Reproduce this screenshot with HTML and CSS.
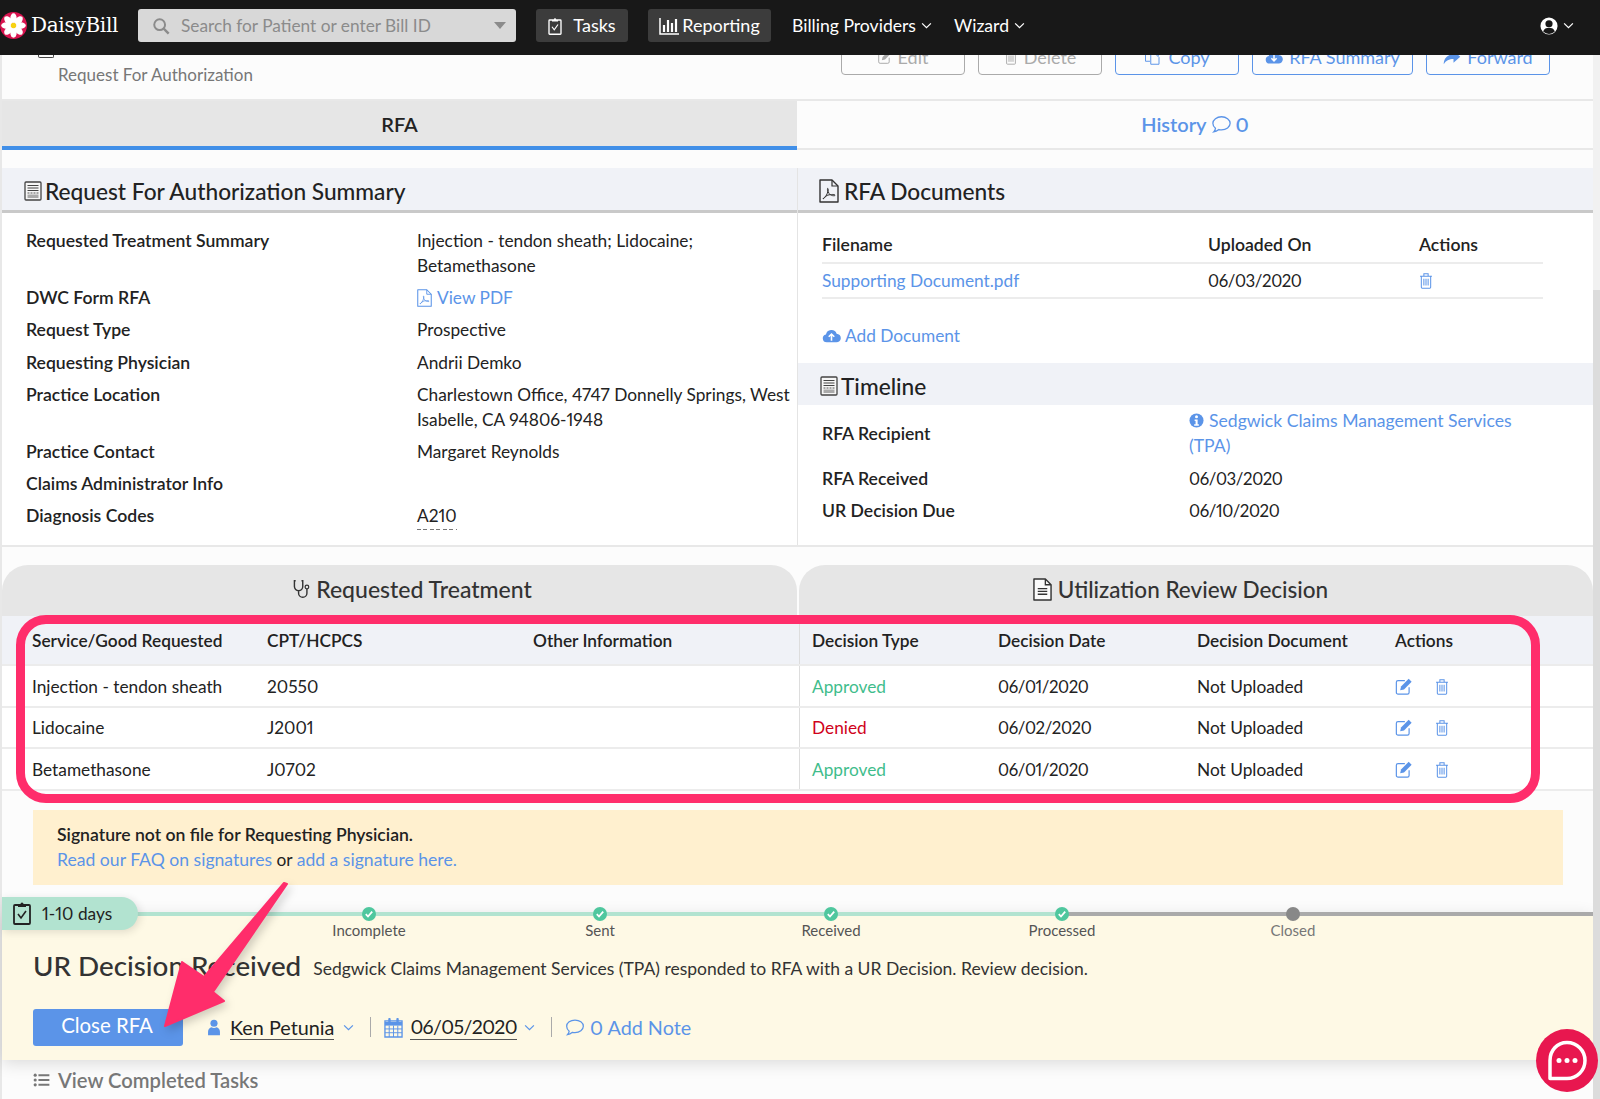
FILE: index.html
```html
<!DOCTYPE html>
<html lang="en">
<head>
<meta charset="utf-8">
<title>DaisyBill RFA</title>
<link rel="stylesheet" href="styles.css">
</head>
<body>
<svg class="sprite" xmlns="http://www.w3.org/2000/svg">
  <symbol id="i-chev" viewBox="0 0 12 8"><path d="M1 1.5 6 6.5l5-5" fill="none" stroke="currentColor" stroke-width="1.4"/></symbol>
  <symbol id="i-rfa" viewBox="0 0 18 20"><rect x="1" y="1" width="16" height="18" rx="1" fill="#f6f6f6" stroke="#444" stroke-width="1.3"/><path d="M3.5 4.5h11M3.5 7h11M3.5 9.5h11" stroke="#444" stroke-width="1"/><path d="M3.5 12h11" stroke="#555" stroke-width="1" stroke-dasharray="2 1"/><rect x="3.5" y="13.5" width="11" height="3.5" fill="#aaa"/></symbol>
  <symbol id="i-pdf" viewBox="0 0 20 24"><path d="M1 1h12l6 6v16H1z" fill="none" stroke="currentColor" stroke-width="1.4" stroke-linejoin="round"/><path d="M13 1v6h6" fill="none" stroke="currentColor" stroke-width="1.2"/><path d="M4 20c2-1 4-4 5-8 .5-2 0-3-.5-2.500-.5 1 1 5 3 6.500 2 1 5 1 4.500 0-.5-1-6-.5-8 .5-2 1-4 3-4 3.500z" fill="none" stroke="currentColor" stroke-width="1"/></symbol>
  <symbol id="i-trash" viewBox="0 0 16 20"><path d="M1 5h14M5.500 5V2h5v3M2.500 5v13a1 1 0 0 0 1 1h9a1 1 0 0 0 1-1V5M5.500 8v8M8 8v8M10.500 8v8" fill="none" stroke="currentColor" stroke-width="1.2"/></symbol>
  <symbol id="i-edit" viewBox="0 0 20 20"><path d="M16 11v6a2 2 0 0 1-2 2H3a2 2 0 0 1-2-2V5a2 2 0 0 1 2-2h8" fill="none" stroke="currentColor" stroke-width="1.4"/><path d="M6.500 10 15.500 1l3.500 3.500L10 13.500 5.500 14.500z" fill="currentColor"/></symbol>
  <symbol id="i-copy" viewBox="0 0 22 20"><path d="M7 5V1h7l4 4v3M7 5H1v10h6" fill="none" stroke="currentColor" stroke-width="1.3"/><path d="M8 6h7l4 4v9H8z" fill="none" stroke="currentColor" stroke-width="1.3"/></symbol>
  <symbol id="i-cloud-down" viewBox="0 0 24 18"><path d="M6 17a5 5 0 0 1-1-9.900A7 7 0 0 1 18.500 6 5.500 5.500 0 0 1 18 17z" fill="currentColor"/><path d="M12 5v8M8.500 10l3.500 3.500 3.500-3.500" fill="none" stroke="#fff" stroke-width="2"/></symbol>
  <symbol id="i-cloud-up" viewBox="0 0 24 18"><path d="M6 17a5 5 0 0 1-1-9.900A7 7 0 0 1 18.500 6 5.500 5.500 0 0 1 18 17z" fill="currentColor"/><path d="M12 15V7M8.500 10 12 6.500l3.500 3.500" fill="none" stroke="#fff" stroke-width="2"/></symbol>
  <symbol id="i-forward" viewBox="0 0 24 20"><path d="M14 1l9 8-9 8v-5C8 12 4 14 1 19 1 11 6 6 14 5.500z" fill="currentColor"/></symbol>
  <symbol id="i-comment" viewBox="0 0 24 22"><path d="M12 2c5.500 0 10 3.400 10 7.600s-4.500 7.600-10 7.600c-1 0-2-.1-3-.4-1.500 1.200-3.500 2.500-6 2.800 1-1 1.800-2.500 2-4.200C3.200 14 2 12 2 9.600 2 5.400 6.500 2 12 2z" fill="none" stroke="currentColor" stroke-width="1.500"/></symbol>
  <symbol id="i-steth" viewBox="0 0 20 24"><path d="M3 2H1.500v7a5 5 0 0 0 10 0V2H10M6.500 14v3a5 5 0 0 0 10 0v-5" fill="none" stroke="currentColor" stroke-width="1.700"/><circle cx="16.500" cy="9.500" r="2.200" fill="none" stroke="currentColor" stroke-width="1.500"/></symbol>
  <symbol id="i-file" viewBox="0 0 20 24"><path d="M1 1h12l6 6v16H1z" fill="#fafafa" stroke="currentColor" stroke-width="1.500" stroke-linejoin="round"/><path d="M13 1v6h6M5 11h10M5 14h10M5 17h10" fill="none" stroke="currentColor" stroke-width="1.400"/></symbol>
  <symbol id="i-clip" viewBox="0 0 18 24"><path d="M5 4H2a1 1 0 0 0-1 1v17a1 1 0 0 0 1 1h14a1 1 0 0 0 1-1V5a1 1 0 0 0-1-1h-3" fill="none" stroke="currentColor" stroke-width="1.800"/><path d="M5 6V3h2.500a1.500 1.500 0 0 1 3 0H13v3z" fill="currentColor"/><path d="M5 13l3 4 5-7" fill="none" stroke="currentColor" stroke-width="1.600"/></symbol>
  <symbol id="i-user" viewBox="0 0 16 20"><circle cx="8" cy="5" r="4.200" fill="currentColor"/><path d="M1 19v-4c0-3 2-5 4-5.300a6 6 0 0 0 6 0c2 .3 4 2.300 4 5.300v4z" fill="currentColor"/></symbol>
  <symbol id="i-cal" viewBox="0 0 20 22"><path d="M1 4h18v17H1z" fill="none" stroke="currentColor" stroke-width="1.400"/><path d="M1 5h18v4H1z" fill="currentColor"/><path d="M1 12.500h18M1 16.500h18M5.500 9v12M10 9v12M14.500 9v12" stroke="currentColor"/><rect x="4.500" y="1" width="2.500" height="5" rx="1" fill="currentColor"/><rect x="13" y="1" width="2.500" height="5" rx="1" fill="currentColor"/></symbol>
  <symbol id="i-list" viewBox="0 0 18 16"><path d="M5.500 2.500H18M5.500 8H18M5.500 13.500H18" stroke="currentColor" stroke-width="2.400"/><circle cx="1.800" cy="2.500" r="1.800" fill="currentColor"/><circle cx="1.800" cy="8" r="1.800" fill="currentColor"/><circle cx="1.800" cy="13.500" r="1.800" fill="currentColor"/></symbol>
  <symbol id="i-check" viewBox="0 0 14 14"><circle cx="7" cy="7" r="7" fill="#4fc79e"/><path d="M3.800 7.200 6 9.500l4.200-4.800" fill="none" stroke="#fff" stroke-width="1.800"/></symbol>
</svg>

<header class="nav">
  <div class="logo">
    <svg class="logo-mark" viewBox="0 0 28 28" aria-hidden="true">
      <circle cx="14" cy="14" r="14" fill="#d9134f"/>
      <g fill="#fff">
        <ellipse cx="14" cy="6.500" rx="3.300" ry="5.200"/>
        <ellipse cx="14" cy="6.500" rx="3.300" ry="5.200" transform="rotate(45 14 14)"/>
        <ellipse cx="14" cy="6.500" rx="3.300" ry="5.200" transform="rotate(90 14 14)"/>
        <ellipse cx="14" cy="6.500" rx="3.300" ry="5.200" transform="rotate(135 14 14)"/>
        <ellipse cx="14" cy="6.500" rx="3.300" ry="5.200" transform="rotate(180 14 14)"/>
        <ellipse cx="14" cy="6.500" rx="3.300" ry="5.200" transform="rotate(225 14 14)"/>
        <ellipse cx="14" cy="6.500" rx="3.300" ry="5.200" transform="rotate(270 14 14)"/>
        <ellipse cx="14" cy="6.500" rx="3.300" ry="5.200" transform="rotate(315 14 14)"/>
      </g>
      <circle cx="14" cy="14" r="2.800" fill="#f7d313"/>
    </svg>
    <span class="logo-text">DaisyBill</span>
  </div>
  <div class="search">
    <svg class="search-icon" viewBox="0 0 20 20" aria-hidden="true"><circle cx="8.500" cy="8.500" r="6" fill="none" stroke="currentColor" stroke-width="2.200"/><path d="M13 13l5.500 5.500" stroke="currentColor" stroke-width="2.600"/></svg>
    <span class="search-text">Search for Patient or enter Bill ID</span>
    <span class="search-caret"></span>
  </div>
  <div class="nav-btn nav-tasks"><svg class="ic-clip-nav"><use href="#i-clip"/></svg>Tasks</div>
  <div class="nav-btn nav-reporting">
    <svg class="ic-bars" viewBox="0 0 20 18" aria-hidden="true"><path d="M1 1v16h19" fill="none" stroke="#fff" stroke-width="1.500"/><path d="M5 15V8M9 15V3M13 15V6M17 15V2" stroke="#fff" stroke-width="2.200"/></svg>Reporting
  </div>
  <div class="nav-link nav-billing">Billing Providers<svg class="chev"><use href="#i-chev"/></svg></div>
  <div class="nav-link nav-wizard">Wizard<svg class="chev"><use href="#i-chev"/></svg></div>
  <div class="nav-user">
    <svg class="ic-user-round" viewBox="0 0 20 20" aria-hidden="true"><circle cx="10" cy="10" r="9.500" fill="#fff"/><circle cx="10" cy="7.500" r="4" fill="#181818"/><path d="M3.500 16c1-3 3.500-4 6.500-4s5.500 1 6.500 4a9 9 0 0 1-13 0z" fill="#181818"/></svg>
    <svg class="chev"><use href="#i-chev"/></svg>
  </div>
</header>

<div class="workspace">
  <main class="main">
    <div class="title-row">
      <div class="title-left">
        <div class="title-icon"></div>
        <div class="subtitle">Request For Authorization</div>
      </div>
      <div class="actions">
        <span class="btn btn-off"><svg class="ic-16"><use href="#i-edit"/></svg>Edit</span>
        <span class="btn btn-off"><svg class="ic-16"><use href="#i-trash"/></svg>Delete</span>
        <span class="btn"><svg class="ic-18"><use href="#i-copy"/></svg>Copy</span>
        <span class="btn btn-wide"><svg class="ic-18"><use href="#i-cloud-down"/></svg>RFA Summary</span>
        <span class="btn"><svg class="ic-18"><use href="#i-forward"/></svg>Forward</span>
      </div>
    </div>

    <div class="tabs">
      <div class="tab tab-on">RFA</div>
      <div class="tab tab-link">History <svg class="ic-comment"><use href="#i-comment"/></svg> 0</div>
    </div>

    <section class="info">
      <div class="info-left">
        <h2 class="head head-line"><svg class="ic-rfa"><use href="#i-rfa"/></svg>Request For Authorization Summary</h2>
        <dl class="facts">
          <dt>Requested Treatment Summary</dt><dd>Injection - tendon sheath; Lidocaine; Betamethasone</dd>
          <dt>DWC Form RFA</dt><dd><a class="link"><svg class="ic-pdf-sm"><use href="#i-pdf"/></svg>View PDF</a></dd>
          <dt>Request Type</dt><dd>Prospective</dd>
          <dt>Requesting Physician</dt><dd>Andrii Demko</dd>
          <dt>Practice Location</dt><dd>Charlestown Office, 4747 Donnelly Springs, West Isabelle, CA 94806-1948</dd>
          <dt>Practice Contact</dt><dd>Margaret Reynolds</dd>
          <dt>Claims Administrator Info</dt><dd></dd>
          <dt>Diagnosis Codes</dt><dd><span class="dashed">A210</span></dd>
        </dl>
      </div>
      <div class="info-right">
        <h2 class="head head-line head-docs"><svg class="ic-pdf-lg"><use href="#i-pdf"/></svg>RFA Documents</h2>
        <div class="docs">
          <div class="doc-row doc-head"><span>Filename</span><span>Uploaded On</span><span>Actions</span></div>
          <div class="doc-row doc-body"><a class="link">Supporting Document.pdf</a><span class="num">06/03/2020</span><svg class="ic-trash link"><use href="#i-trash"/></svg></div>
          <a class="link add-doc"><svg class="ic-19"><use href="#i-cloud-up"/></svg>Add Document</a>
        </div>
        <h2 class="head head-timeline"><svg class="ic-rfa"><use href="#i-rfa"/></svg>Timeline</h2>
        <div class="timeline">
          <div class="tl-row"><strong>RFA Recipient</strong><a class="link tl-link"><svg class="ic-info" viewBox="0 0 16 16" aria-hidden="true"><circle cx="8" cy="8" r="7.500" fill="currentColor"/><circle cx="8" cy="4" r="1.600" fill="#fff"/><path d="M6 7h3.200v5H10.500v1.500h-5V12H7V8.500H6z" fill="#fff"/></svg>Sedgwick Claims Management Services (TPA)</a></div>
          <div class="tl-row"><strong>RFA Received</strong><span class="num">06/03/2020</span></div>
          <div class="tl-row"><strong>UR Decision Due</strong><span class="num">06/10/2020</span></div>
        </div>
      </div>
    </section>

    <section class="treat">
      <div class="treat-heads">
        <h2 class="round-head round-left"><svg class="ic-steth"><use href="#i-steth"/></svg>Requested Treatment</h2>
        <h2 class="round-head round-right"><svg class="ic-file"><use href="#i-file"/></svg>Utilization Review Decision</h2>
      </div>
      <div class="t-row t-head"><span>Service/Good Requested</span><span>CPT/HCPCS</span><span>Other Information</span><span>Decision Type</span><span>Decision Date</span><span>Decision Document</span><span>Actions</span></div>
      <div class="t-row"><span>Injection - tendon sheath</span><span>20550</span><span></span><span class="ok">Approved</span><span class="num">06/01/2020</span><span>Not Uploaded</span><span class="t-actions"><svg class="ic-edit"><use href="#i-edit"/></svg><svg class="ic-trash"><use href="#i-trash"/></svg></span></div>
      <div class="t-row"><span>Lidocaine</span><span>J2001</span><span></span><span class="no">Denied</span><span class="num">06/02/2020</span><span>Not Uploaded</span><span class="t-actions"><svg class="ic-edit"><use href="#i-edit"/></svg><svg class="ic-trash"><use href="#i-trash"/></svg></span></div>
      <div class="t-row"><span>Betamethasone</span><span>J0702</span><span></span><span class="ok">Approved</span><span class="num">06/01/2020</span><span>Not Uploaded</span><span class="t-actions"><svg class="ic-edit"><use href="#i-edit"/></svg><svg class="ic-trash"><use href="#i-trash"/></svg></span></div>
    </section>

    <div class="notice">
      <strong>Signature not on file for Requesting Physician.</strong><br>
      <a class="link">Read our FAQ on signatures</a> or <a class="link">add a signature here.</a>
    </div>

    <section class="panel">
      <div class="track">
        <div class="pill"><svg class="ic-clip"><use href="#i-clip"/></svg>1-10 days</div>
        <div class="step"><svg class="dot"><use href="#i-check"/></svg>Incomplete</div>
        <div class="step"><svg class="dot"><use href="#i-check"/></svg>Sent</div>
        <div class="step"><svg class="dot"><use href="#i-check"/></svg>Received</div>
        <div class="step"><svg class="dot"><use href="#i-check"/></svg>Processed</div>
        <div class="step step-off"><span class="dot dot-off"></span>Closed</div>
      </div>
      <div class="status">
        <h1 class="status-title">UR Decision Received</h1>
        <p class="status-text">Sedgwick Claims Management Services (TPA) responded to RFA with a UR Decision. Review decision.</p>
      </div>
      <div class="panel-actions">
        <span class="primary">Close RFA</span>
        <svg class="ic-user link"><use href="#i-user"/></svg>
        <span class="under">Ken Petunia</span>
        <svg class="chev chev-blue"><use href="#i-chev"/></svg>
        <span class="sep"></span>
        <svg class="ic-cal link"><use href="#i-cal"/></svg>
        <span class="under under-date">06/05/2020</span>
        <svg class="chev chev-blue chev-date"><use href="#i-chev"/></svg>
        <span class="sep"></span>
        <svg class="ic-note link"><use href="#i-comment"/></svg>
        <a class="link">0 Add Note</a>
      </div>
    </section>

    <div class="completed"><svg class="ic-list"><use href="#i-list"/></svg>View Completed Tasks</div>
  </main>
  <aside class="scrollbar"><div class="thumb"></div></aside>
</div>

<div class="callout-box"></div>
<svg class="callout-arrow" viewBox="0 0 1600 1099" aria-hidden="true">
  <path d="M287 884 213 992 224 1001 165 1026 182 962 204 977 284 883z" fill="#ff2d6b" stroke="#ff2d6b" stroke-width="2" stroke-linejoin="round"/>
</svg>
<div class="chat">
  <svg viewBox="0 0 62 62" aria-hidden="true"><path d="M31 13c10 0 18 8 18 18s-8 18-18 18H14V31c0-10 7-18 17-18z" fill="none" stroke="#fff" stroke-width="3.500" stroke-linejoin="round"/><circle cx="23" cy="31" r="2.500" fill="#fff"/><circle cx="31" cy="31" r="2.500" fill="#fff"/><circle cx="39" cy="31" r="2.500" fill="#fff"/></svg>
</div>
</body>
</html>
```

FILE: styles.css
```css
* { box-sizing: border-box; }
html, body { margin: 0; height: 1099px; overflow: hidden; }
body {
  position: relative;
  display: flex;
  flex-direction: column;
  font-family: "Lato", "Open Sans", sans-serif;
  font-size: 17.3px;
  line-height: 25px;
  color: #222;
  background: #fcfcfc;
  font-variant-numeric: proportional-nums;
}
svg { flex: none; }
.sprite { display: none; }
.link { color: #5b94e8; }
h1, h2, p, dl, dd { margin: 0; font-weight: 400; }
.num { font-size: 16.8px; letter-spacing: -.4px; }

/* nav */
.nav { flex: none; height: 55px; display: flex; align-items: center; background: #181818; color: #fff; padding-bottom: 4px; font-size: 18px; }
.logo { display: flex; align-items: center; width: 138px; }
.logo-mark { width: 27px; height: 27px; }
.logo-text { font-family: "DejaVu Serif", serif; font-size: 20px; margin-left: 4px; letter-spacing: -.3px; }
.search { width: 378px; height: 33px; background: #d8d8d8; border-radius: 3px; display: flex; align-items: center; padding-left: 14px; color: #8b8b8b; font-size: 17.3px; }
.search-icon { width: 18px; height: 18px; }
.search-text { margin-left: 11px; flex: 1; }
.search-caret { width: 0; height: 0; border: 6px solid transparent; border-top: 7px solid #8b8b8b; border-bottom: 0; margin-right: 10px; }
.nav-btn { height: 33px; background: #3c3c3c; border-radius: 3px; display: flex; align-items: center; justify-content: center; }
.nav-tasks { width: 92px; margin-left: 20px; }
.nav-reporting { width: 123px; margin-left: 20px; }
.ic-clip-nav { width: 14px; height: 18px; margin-right: 11px; color: #fff; }
.ic-bars { width: 20px; height: 18px; margin-right: 3px; }
.nav-link { display: flex; align-items: center; font-size: 17.6px; }
.nav-billing { margin-left: 21px; }
.nav-wizard { margin-left: 22px; }
.chev { width: 11px; height: 7px; margin-left: 5px; }
.nav-user { margin-left: auto; margin-right: 26px; display: flex; align-items: center; }
.ic-user-round { width: 18px; height: 18px; }

/* frame */
.workspace { flex: 1; display: flex; min-height: 0; }
.main { flex: 1; min-width: 0; border-left: 2px solid #e8e8e8; }
.scrollbar { flex: none; width: 7px; background: #f1f1f1; display: flex; flex-direction: column; padding-top: 235px; }
.thumb { flex: 1; background: #dcdcdc; }

/* title */
.title-row { height: 46px; display: flex; justify-content: space-between; align-items: flex-end; border-bottom: 2px solid #e8e8e8; padding: 0 43px 24px 0; overflow: hidden; }
.title-left { align-self: flex-start; }
.title-icon { width: 16px; height: 3px; margin-left: 36px; border: 1.500px solid #444; border-top: 0; border-radius: 0 0 2px 2px; }
.subtitle { margin: 4px 0 0 56px; color: #777; font-size: 17px; }
.actions { display: flex; gap: 13px; flex: none; font-size: 18px; }
.btn { width: 124px; height: 36px; display: flex; align-items: center; justify-content: center; gap: 6px; border: 1.500px solid #5b94e8; border-radius: 4px; color: #5b94e8; }
.btn-off { border-color: #aaa; color: #aaa; }
.btn-wide { width: 161px; }
.ic-16 { width: 14px; height: 16px; }
.ic-18 { width: 18px; height: 15px; }
.ic-19 { width: 19px; height: 16px; }

/* tabs */
.tabs { display: grid; grid-template-columns: 795px 1fr; height: 49px; }
.tab { display: flex; align-items: center; justify-content: center; font-size: 20px; font-weight: 600; }
.tab-on { background: #e6e6e6; border-bottom: 4px solid #418fe8; padding-top: 2px; }
.tab-link { color: #5b94e8; border-bottom: 2px solid #e8e8e8; gap: 4px; }
.ic-comment { width: 21px; height: 19px; }

/* info */
.info { display: grid; grid-template-columns: 795px 1fr; margin-top: 18px; border-bottom: 2px solid #e8e8e8; background: #fff; }
.head { display: flex; align-items: center; height: 42px; padding-top: 4px; font-size: 22.700px; font-weight: 500; background: #f0f2f7; color: #222; }
.head-line { height: 45px; border-bottom: 3px solid #c9c9c9; padding-left: 22px; }
.head-docs { padding-left: 21px; }
.head-timeline { padding-left: 22px; }
.ic-rfa { width: 18px; height: 20px; margin-right: 3px; }
.ic-pdf-lg { width: 20px; height: 24px; margin-right: 5px; color: #333; }
.facts { display: grid; grid-template-columns: 391px 1fr; row-gap: 7.200px; padding: 15px 0 15px 24px; }
dt { font-weight: 600; font-size: 17.6px; }
dd { max-width: 378px; }
.ic-pdf-sm { width: 15px; height: 18px; margin-right: 5px; vertical-align: -3px; }
.dashed { display: inline-block; padding-bottom: 2px; line-height: 24px; background: repeating-linear-gradient(to right, #777 0 4px, transparent 4px 6.500px) left bottom / 100% 1.500px no-repeat; }
.info-right { border-left: 1px solid #e4e4e4; }
.docs { padding: 14px 0 15px 24px; }
.doc-row { display: grid; grid-template-columns: 386px 211px 124px; width: 721px; align-items: center; border-bottom: 2px solid #ececec; }
.doc-head { height: 37px; font-weight: 600; font-size: 17.6px; }
.doc-body { height: 35px; }
.ic-trash { width: 14px; height: 17px; }
.add-doc { display: flex; align-items: center; gap: 4px; margin-top: 24px; }
.timeline { padding: 3px 0 0 24px; display: flex; flex-direction: column; gap: 7.500px; }
.tl-row { display: grid; grid-template-columns: 367px 340px; align-items: center; }
.tl-row strong { font-weight: 600; font-size: 17.6px; }
.tl-link { font-size: 17.600px; }
.ic-info { width: 15px; height: 15px; margin-right: 5px; vertical-align: -1px; }

/* treatment */
.treat { margin-top: 18px; background: #fff; }
.treat-heads { display: grid; grid-template-columns: 795px 1fr; gap: 2px; background: #fcfcfc; }
.round-head { height: 51px; display: flex; align-items: center; justify-content: center; gap: 6px; padding-bottom: 3px; background: #e6e6e6; border-radius: 26px 26px 0 0; font-size: 23px; font-weight: 500; color: #333; }
.round-left { padding-left: 26px; }
.round-right { padding-right: 31px; font-size: 22.500px; }
.ic-steth { width: 17px; height: 20px; }
.ic-file { width: 19px; height: 23px; }
.t-row { display: grid; grid-template-columns: 265px 266px 266px 199px 199px 198px 1fr; height: 41.500px; border-bottom: 2px solid #ececec; align-items: stretch; }
.t-row > span { display: flex; align-items: center; }
.t-row > span:first-child { padding-left: 30px; }
.t-row > span:nth-child(4) { border-left: 1px solid #ddd; padding-left: 12px; }
.t-head { height: 50px; background: #f0f2f7; font-weight: 600; }
.ok { color: #3fbd8c; }
.no { color: #d0021b; }
.t-actions { gap: 22px; color: #5b94e8; }
.ic-edit { width: 18px; height: 17px; }

/* notice */
.notice { margin: 19px 30px 0 31px; height: 75px; padding: 12px 24px; background: #fff0cf; }
.notice strong { font-weight: 600; font-size: 17.6px; }
.notice .link { font-size: 17.600px; }

/* panel */
.panel { display: flow-root; margin-top: 29px; height: 146px; background: #fef9e5; box-shadow: 0 3px 16px rgba(0,0,0,.14); }
.track { position: relative; margin-top: -17px; height: 43px; display: flex; background: linear-gradient(to right, #b2e3d0 1060px, #aaa 1060px) 0 15px / 100% 4px no-repeat; }
.pill { width: 136px; height: 33px; margin-right: 115.500px; display: flex; align-items: center; gap: 11px; padding-left: 11px; background: #b2e3d0; border-radius: 0 17px 17px 0; box-shadow: 2px 2px 8px rgba(0,0,0,.12); font-size: 17.300px; }
.ic-clip { width: 18px; height: 24px; }
.step { width: 231px; display: flex; flex-direction: column; align-items: center; padding-top: 10px; font-size: 15px; line-height: 18px; color: #555; }
.step-off { color: #777; }
.dot { width: 14px; height: 14px; }
.dot-off { display: block; background: #888; border-radius: 50%; }
.status { display: flex; align-items: center; gap: 12px; padding-left: 31px; margin-top: 9px; }
.status-title { font-size: 27.800px; line-height: 34px; font-weight: 500; color: #333; }
.status-text { font-size: 17.500px; color: #333; margin-top: 5px; }
.panel-actions { display: flex; align-items: center; margin-top: 26px; padding-left: 31px; font-size: 19.800px; }
.primary { width: 150px; height: 37px; padding: 0 2px 3px 0; display: flex; align-items: center; justify-content: center; background: #5b94e8; color: #fff; border-radius: 3px; margin-right: 24px; font-size: 20.400px; }
.ic-user { width: 14px; height: 17px; margin-right: 9px; }
.under { border-bottom: 1px solid #555; line-height: 24px; }
.under-date { font-size: 19.500px; letter-spacing: -.6px; }
.chev-blue { color: #5b94e8; margin-left: 9px; }
.chev-date { margin-left: 7px; }
.sep { width: 1px; height: 20px; background: #aaa; margin: 0 13px 0 16px; }
.ic-cal { width: 19px; height: 21px; margin-right: 7px; }
.ic-note { width: 20px; height: 19px; margin-right: 5px; }
.completed { margin: 8px 0 0 31px; display: flex; align-items: center; gap: 8px; font-size: 20.200px; font-weight: 600; color: #777; }
.ic-list { width: 17px; height: 14px; }

/* overlays */
.callout-box { position: absolute; left: 16px; top: 615px; width: 1524px; height: 188px; border: 9px solid #ff2d6b; border-radius: 30px; pointer-events: none; }
.callout-arrow { position: absolute; left: 0; top: 0; width: 1600px; height: 1099px; pointer-events: none; filter: drop-shadow(3px 4px 4px rgba(0,0,0,.18)); }
.chat { position: absolute; left: 1536px; top: 1029px; width: 62px; height: 63px; border-radius: 50%; background: #e8174f; }
.chat svg { display: block; width: 62px; height: 63px; }
```
